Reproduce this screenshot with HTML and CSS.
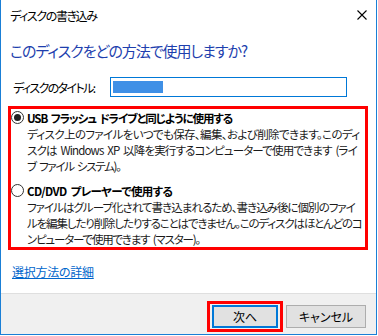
FILE: index.html
```html
<!doctype html>
<html>
<head>
<meta charset="utf-8">
<link rel="stylesheet" href="styles.css">
<title>ディスクの書き込み</title>
</head>
<body>
<div class="window">
  <div class="titlebar">
    <span class="title" data-fit="88">ディスクの書き込み</span>
    <svg class="close" width="10" height="10" viewBox="0 0 10 10"><path d="M0.5 0.5 L9.5 9.5 M9.5 0.5 L0.5 9.5" stroke="#000" stroke-width="1.1" fill="none"/></svg>
  </div>
  <div class="content">
    <h1 class="instruction"><span data-fit="238">このディスクをどの方法で使用しますか?</span></h1>
    <div class="title-row">
      <label class="title-label"><span data-fit="83">ディスクのタイトル:</span></label>
      <div class="title-input"><span class="selected"></span></div>
    </div>
    <div class="choices">
      <div class="choice">
        <div class="choice-head"><span class="radio checked"></span><span class="choice-label" data-fit="206">USB フラッシュ ドライブと同じように使用する</span></div>
        <p class="choice-desc">
          <span class="line" data-fit="333">ディスク上のファイルをいつでも保存、編集、および削除できます。このディ</span>
          <span class="line" data-fit="331">スクは Windows XP 以降を実行するコンピューターで使用できます (ライ</span>
          <span class="line" data-fit="95">ブ ファイル システム)。</span>
        </p>
      </div>
      <div class="choice">
        <div class="choice-head"><span class="radio"></span><span class="choice-label" data-fit="146">CD/DVD プレーヤーで使用する</span></div>
        <p class="choice-desc">
          <span class="line" data-fit="329">ファイルはグループ化されて書き込まれるため、書き込み後に個別のファイ</span>
          <span class="line" data-fit="336">ルを編集したり削除したりすることはできません。このディスクはほとんどのコ</span>
          <span class="line" data-fit="174">ンピューターで使用できます (マスター)。</span>
        </p>
      </div>
    </div>
    <a class="help-link" href="#" data-fit="82">選択方法の詳細</a>
  </div>
  <div class="footer">
    <span class="default-mark"><button class="btn btn-default">次へ</button></span>
    <button class="btn">キャンセル</button>
  </div>
</div>
<script src="script.js"></script>
</body>
</html>
```

FILE: styles.css
```css
* {
    box-sizing: border-box;
}
body {
    margin: 0;
    background: #fff;
    font-family: "Noto Sans CJK JP", "Noto Sans", sans-serif;
    font-size: 12px;
    color: #000;
    font-feature-settings: "palt";
}
.window {
    width: 377px;
    height: 335px;
    border: 1px solid #1a7fd6;
    border-top: 0;
    display: flex;
    flex-direction: column;
}
.titlebar {
    height: 30px;
    flex: none;
    display: flex;
    align-items: center;
    justify-content: space-between;
    padding: 0 9px 0 9px;
}
.title {
    font-size: 12px;
    white-space: nowrap;
}
.close {
    display: block;
}
.content {
    flex: 1;
    padding: 0 0 0 7px;
}
.instruction {
    margin: 11px 0 0 2px;
    font-size: 15px;
    font-weight: normal;
    line-height: 20px;
    color: #1e3fae;
    white-space: nowrap;
}
.title-row {
    display: flex;
    align-items: center;
    margin-top: 16px;
    height: 20px;
}
.title-label {
    width: 102px;
    padding-left: 5px;
    white-space: nowrap;
}
.title-input {
    width: 237px;
    height: 20px;
    border: 1px solid #0078d7;
    padding: 3px 2px;
}
.selected {
    display: block;
    width: 50px;
    height: 12px;
    background: #3f90e6;
    filter: blur(0.6px);
}
.choices {
    margin-top: 9px;
    width: 360px;
    height: 144px;
    border: 3px solid #ff0000;
}
.choice-head {
    display: flex;
    align-items: center;
    height: 17px;
}
.choice + .choice .choice-head {
    margin-top: 8px;
}
.radio {
    flex: none;
    width: 13px;
    height: 13px;
    border: 1px solid #333;
    border-radius: 50%;
    display: flex;
    align-items: center;
    justify-content: center;
    margin-right: 3px;
}
.radio.checked::after {
    content: "";
    width: 7px;
    height: 7px;
    border-radius: 50%;
    background: #222;
}
.choice-label {
    font-size: 11.5px;
    font-weight: bold;
    word-spacing: 2px;
    white-space: nowrap;
}
.choice-desc {
    margin: 0 0 0 16px;
    color: #1a1a1a;
}
.line {
    display: block;
    width: max-content;
    font-size: 11.5px;
    line-height: 16px;
    word-spacing: 2px;
    white-space: pre;
}
.help-link {
    display: inline-block;
    margin: 13px 0 0 4px;
    color: #0066cc;
    text-decoration: underline;
    white-space: nowrap;
}
.footer {
    flex: none;
    height: 41px;
    background: #f0f0f0;
    border-top: 1px solid #dfdfdf;
    display: flex;
    align-items: flex-start;
    justify-content: flex-end;
    gap: 3px;
    padding: 7px 10px 0 0;
}
.default-mark {
    border: 3px solid #ff0000;
    padding: 1px 2px;
    display: flex;
}
.btn {
    font-family: inherit;
    font-size: 12px;
    font-feature-settings: "palt";
    width: 80px;
    height: 23px;
    margin-top: 4px;
    background: #e1e1e1;
    border: 1px solid #adadad;
    padding: 0;
    color: #000;
}
.btn-default {
    width: 66px;
    margin-top: 0;
    border: 2px solid #0078d7;
}
```

FILE: script.js
```js
// squeeze each label to the width it has in the dialog
document.querySelectorAll('[data-fit]').forEach(function (el) {
  var target = parseFloat(el.dataset.fit);
  var chars = Array.from(el.textContent.trim()).length;
  var spacing = 0;
  for (var i = 0; i < 3; i++) {
    var natural = el.getBoundingClientRect().width - spacing * chars;
    // the last letter's spacing trails, so leave it out
    spacing = (target - natural) / (chars - 1);
    el.style.letterSpacing = spacing.toFixed(2) + 'px';
  }
});
```
